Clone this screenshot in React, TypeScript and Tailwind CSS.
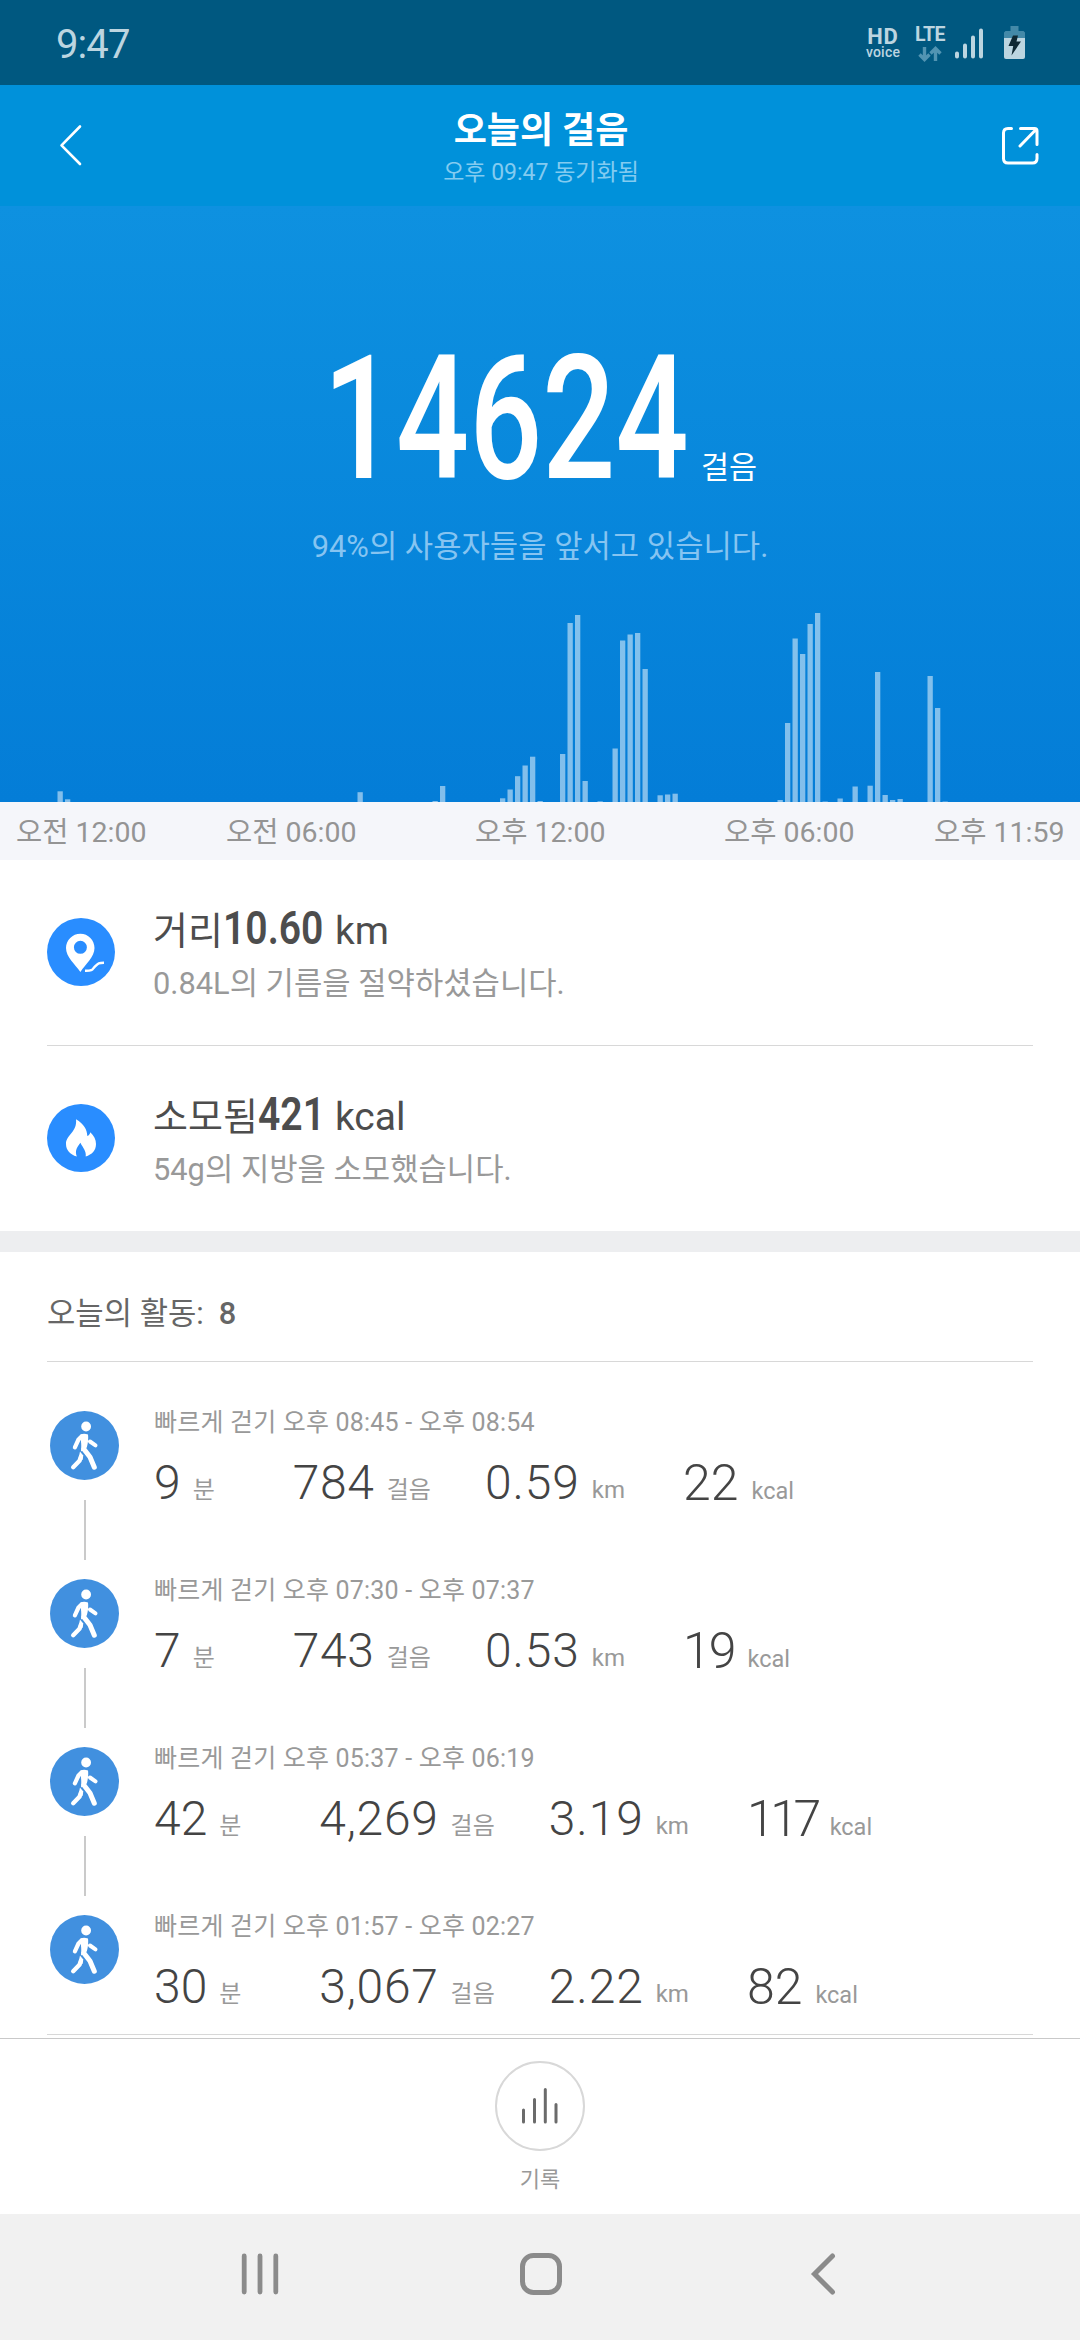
interface Activity {
  time: string;
  minutes: string;
  steps: string;
  distance: string;
  calories: string;
  caloriesClass: string;
}

const activities: Activity[] = [
  {
    time: "오후 08:45 - 오후 08:54",
    minutes: "9",
    steps: "784",
    distance: "0.59",
    calories: "22",
    caloriesClass: "tracking-normal",
  },
  {
    time: "오후 07:30 - 오후 07:37",
    minutes: "7",
    steps: "743",
    distance: "0.53",
    calories: "19",
    caloriesClass: "tracking-[-2px]",
  },
  {
    time: "오후 05:37 - 오후 06:19",
    minutes: "42",
    steps: "4,269",
    distance: "3.19",
    calories: "117",
    caloriesClass: "tracking-[-4.5px]",
  },
  {
    time: "오후 01:57 - 오후 02:27",
    minutes: "30",
    steps: "3,067",
    distance: "2.22",
    calories: "82",
    caloriesClass: "tracking-normal",
  },
];

const axisLabels = [
  "오전 12:00",
  "오전 06:00",
  "오후 12:00",
  "오후 06:00",
  "오후 11:59",
];

// [slot, height], one slot is ten minutes
const bars: [number, number][] = [
  [0, 10.7],
  [1, 2.7],
  [40, 9.8],
  [50, 1],
  [51, 16],
  [59, 3.7],
  [60, 12.5],
  [61, 25.8],
  [62, 36.5],
  [63, 45.3],
  [64, 1],
  [67, 48],
  [68, 179],
  [69, 187],
  [70, 21],
  [72, 0.7],
  [74, 53.5],
  [75, 161.5],
  [76, 167.5],
  [77, 169],
  [78, 133],
  [80, 6.7],
  [81, 7.5],
  [82, 8.3],
  [96, 2],
  [97, 79],
  [98, 163.5],
  [99, 148],
  [100, 178],
  [101, 189],
  [102, 0.5],
  [104, 3.5],
  [106, 15.5],
  [108, 16.3],
  [109, 130],
  [110, 7],
  [111, 2],
  [112, 3],
  [116, 126],
  [117, 94],
  [118, 0.5],
];

const StatusBar = () => (
  <div className="h-[85px] shrink-0 bg-[#005880] flex items-start pl-[56px] text-[#bcd5e0]">
    <span className="text-[40px] leading-[50px] tracking-[-0.9px] mt-[20px]">
      9:47
    </span>
    <div className="flex ml-auto mr-[55px] mt-[26px]">
      <div className="w-[34px] flex flex-col items-center mr-[14px] pt-[3px]">
        <span className="text-[22px] leading-[16px] font-bold tracking-[0.8px]">
          HD
        </span>
        <span className="text-[14px] leading-[14px] font-medium tracking-[0.2px]">
          voice
        </span>
      </div>
      <div className="w-[32px] flex flex-col items-center mr-[9px]">
        <span className="text-[19.5px] leading-[18px] font-bold tracking-[-0.5px]">
          LTE
        </span>
        <svg width="24" height="16" viewBox="0 0 24 16" className="mt-[2px]">
          <path
            d="M6.500 1V13M1.500 8.500L6.500 13.500L11.500 8.500M17.500 15V3M12.500 7.500L17.500 2.500L22.500 7.500"
            fill="none"
            stroke="#5294b2"
            strokeWidth="3.400"
          />
        </svg>
      </div>
      <svg width="28" height="34" viewBox="0 0 28 34" className="mr-[21px]">
        <path
          d="M2 27.500V30.500M10 19.500V30.500M18 11.500V30.500M26 4.500V30.500"
          stroke="#bcd5e0"
          strokeWidth="4"
          strokeLinecap="round"
        />
      </svg>
      <svg width="21" height="33" viewBox="0 0 21 33">
        <path d="M6.500 0H14.500V5H19.500L21 6.500V12H0V6.500L1.500 5H6.500Z" fill="#4389a8" />
        <path d="M0 12H21V31Q21 33 19 33H2Q0 33 0 31Z" fill="#bcd5e0" />
        <path d="M9 9.500H14L12.500 15.500H17L7.500 29.500L9.200 20H4.500Z" fill="#0f2833" />
      </svg>
    </div>
  </div>
);

const Header = () => (
  <div className="h-[121px] shrink-0 bg-[#0091da] flex items-start justify-between">
    <svg
      width="24"
      height="42"
      viewBox="0 0 24 42"
      className="ml-[58px] mt-[39px]"
    >
      <path
        d="M22 2.500L3.500 21.300L22 40"
        fill="none"
        stroke="white"
        strokeWidth="2.600"
        strokeLinecap="round"
        strokeLinejoin="round"
      />
    </svg>
    <div className="flex flex-col items-center pt-[26px]">
      <h1 className="text-[36px] leading-[40px] font-bold text-white">
        오늘의 걸음
      </h1>
      <p className="text-[23px] leading-[30px] mt-[7px] text-[#83cbf0]">
        오후 09:47 동기화됨
      </p>
    </div>
    <svg
      width="40"
      height="40"
      viewBox="0 0 40 40"
      className="mr-[40px] mt-[41px]"
    >
      <path
        d="M11.500 2.500H8Q3.500 2.500 3.500 7V32.500Q3.500 37 8 37H32.500Q37 37 37 32.500V28.500M20.500 2.500H34.500Q37 2.500 37 5V18.500M36 3.500L20 20"
        fill="none"
        stroke="white"
        strokeWidth="3"
        strokeLinecap="round"
        strokeLinejoin="round"
      />
    </svg>
  </div>
);

const StepChart = () => (
  <svg width="1080" height="190" viewBox="0 0 1080 190">
    {bars.map(([slot, height]) => (
      <rect
        key={slot}
        x={57.5 + slot * 7.5}
        y={190 - height}
        width="5.300"
        height={height}
        fill="white"
        fillOpacity="0.500"
      />
    ))}
  </svg>
);

const Hero = () => (
  <div className="h-[596px] shrink-0 bg-linear-to-b from-[#0e91e0] to-[#047dd7] flex flex-col items-center pt-[127px]">
    <div className="flex items-baseline h-[172px] text-white">
      <div className="w-[378px]">
        <span className="inline-block origin-left scale-x-[0.748] text-[172px] leading-[172px] font-medium">
          14624
        </span>
      </div>
      <span className="text-[30.500px] leading-[40px]">걸음</span>
    </div>
    <p className="text-[30.8px] leading-[40px] mt-[22px] text-[#86c4f1]">
      94%의 사용자들을 앞서고 있습니다.
    </p>
    <div className="mt-auto">
      <StepChart />
    </div>
  </div>
);

const PinIcon = () => (
  <svg width="68" height="68" viewBox="0 0 68 68">
    <circle cx="34" cy="34" r="34" fill="#298dff" />
    <path
      fillRule="evenodd"
      d="M33.400 15.700C25.500 15.700 19 22 19 30C19 39 28 46 33.400 54C38.500 46 47.500 39 47.500 30C47.500 22 41.200 15.700 33.400 15.700ZM33.400 22.800A6.500 6.500 0 1 1 33.400 35.800A6.500 6.500 0 1 1 33.400 22.800Z"
      fill="white"
    />
    <path
      d="M38 52.800C47 53 45 51 48 48.500C51 45.500 51 44.700 57 44.700"
      fill="none"
      stroke="white"
      strokeWidth="2.400"
    />
  </svg>
);

const FlameIcon = () => (
  <svg width="68" height="68" viewBox="0 0 68 68">
    <circle cx="34" cy="34" r="34" fill="#298dff" />
    <path
      d="M29 15.300C37 20 40 25.500 40.300 32C42 31.500 43 30 43.300 28.300C47 32 49 35.500 49 40C49 46.500 45 50.500 38.700 52.500C39.500 47 36 44 33.400 38.700C30.500 43 27.500 46 29.800 52.500C23 50.500 19 46 19 40C19 31 30.500 28 29 15.300Z"
      fill="white"
    />
  </svg>
);

const WalkIcon = () => (
  <svg width="69" height="69" viewBox="0 0 69 69">
    <circle cx="34.500" cy="34.500" r="34.500" fill="#4190df" />
    <circle cx="36.100" cy="15.500" r="4.900" fill="white" />
    <path
      d="M30.500 23.500Q34 21.800 38 23.500Q38.800 29 36.800 36.500L31 40.500Q31.500 34 31 31Z"
      fill="white"
    />
    <g
      fill="none"
      stroke="white"
      strokeLinecap="round"
      strokeLinejoin="round"
    >
      <path d="M31.500 25.500L28.500 28.500L24.900 36.300" strokeWidth="4.200" />
      <path d="M40 30.500L45.500 34.300" strokeWidth="4" />
      <path d="M33.800 38L40 46L44.300 56.200" strokeWidth="5" />
      <path d="M31 45.500L29.500 49.800L23.200 56.200" strokeWidth="4.400" />
    </g>
    <path d="M30 40.500L33.200 44.500L32.500 49L28.500 48Z" fill="white" />
  </svg>
);

interface StatRowProps {
  icon: React.ReactNode;
  label: string;
  value: string;
  valueClass: string;
  unit: string;
  note: string;
}

const StatRow = ({
  icon,
  label,
  value,
  valueClass,
  unit,
  note,
}: StatRowProps) => (
  <div className="h-[185px] flex items-start px-[47px]">
    <div className="mt-[58px] w-[68px]">{icon}</div>
    <div className="ml-[38px] pt-[43px]">
      <div className="flex items-baseline h-[50px] text-[38px] leading-[50px] text-[#4d4d4d]">
        <span>{label}</span>
        <div className={valueClass}>
          <span className="inline-block origin-left scale-x-[0.85] text-[46px] leading-[50px] font-semibold">
            {value}
          </span>
        </div>
        <span className="ml-[11px] text-[39px]">{unit}</span>
      </div>
      <p className="mt-[11px] text-[30.800px] leading-[40px] text-[#999999]">
        {note}
      </p>
    </div>
  </div>
);

const ActivityRow = ({
  activity,
  isLast,
}: {
  activity: Activity;
  isLast: boolean;
}) => (
  <div className="h-[168px] flex items-start">
    <div className="w-[69px] ml-[3px] flex flex-col items-center pt-1">
      <WalkIcon />
      {!isLast && <div className="w-[2px] h-[60px] mt-5 bg-[#cacaca]" />}
    </div>
    <div className="ml-[35px] pt-px">
      <p className="text-[25px] leading-[30px] tracking-[0.2px] text-[#999999]">
        빠르게 걷기 {activity.time}
      </p>
      <div className="mt-[14px] flex items-baseline leading-[60px] text-[#999999] text-[24px]">
        <span className="text-[48px] font-light text-[#444444]">
          {activity.minutes}
        </span>
        <span className="ml-[12px] -translate-y-[1.5px]">분</span>
        <span className="ml-[78px] text-[48px] font-light text-[#444444] tracking-[0.7px]">
          {activity.steps}
        </span>
        <span className="ml-[12px] -translate-y-[1.5px]">걸음</span>
        <span className="ml-[54px] text-[48px] font-light text-[#444444] tracking-[0.9px]">
          {activity.distance}
        </span>
        <span className="ml-[12px] -translate-y-[1.5px]">km</span>
        <div className="ml-[58px] text-[50px] font-light text-[#444444] translate-y-px">
          <span className={activity.caloriesClass}>{activity.calories}</span>
        </div>
        <span className="ml-[13px] text-[23.5px]">kcal</span>
      </div>
    </div>
  </div>
);

const BottomBar = () => (
  <div className="h-[176px] shrink-0 border-t border-[#c9c9c9] bg-white flex flex-col items-center">
    <div className="mt-[22px] size-[90px] rounded-full border-2 border-[#d8d8d8] flex items-center justify-center">
      <svg width="38" height="38" viewBox="0 0 38 38">
        <path
          d="M2.500 23V35M13.500 12.500V35M24.300 2.500V35M35 17.500V35"
          stroke="#6b6b6b"
          strokeWidth="3"
          strokeLinecap="round"
        />
      </svg>
    </div>
    <span className="mt-[14px] text-[22px] leading-[30px] text-[#999999]">
      기록
    </span>
  </div>
);

const NavBar = () => (
  <div className="h-[126px] shrink-0 bg-[#f1f1f1] flex items-start pl-[241px] pt-[38px]">
    <svg width="38" height="44" viewBox="0 0 38 44">
      <path
        d="M3.200 4V40M19 4V40M34.800 4V40"
        stroke="#8b8b8b"
        strokeWidth="4.800"
        strokeLinecap="round"
      />
    </svg>
    <svg width="44" height="44" viewBox="0 0 44 44" className="ml-[240px]">
      <rect
        x="3.500"
        y="3.500"
        width="37"
        height="37"
        rx="11"
        fill="none"
        stroke="#8b8b8b"
        strokeWidth="5"
      />
    </svg>
    <svg width="26" height="44" viewBox="0 0 26 44" className="ml-[247px]">
      <path
        d="M22.500 4L4.500 22L22.500 40"
        fill="none"
        stroke="#8b8b8b"
        strokeWidth="5"
        strokeLinecap="round"
      />
    </svg>
  </div>
);

export default function App() {
  return (
    <div className="w-[1080px] h-[2340px] overflow-hidden flex flex-col bg-white font-['Roboto','Noto_Sans_CJK_KR',sans-serif]">
      <StatusBar />
      <Header />
      <Hero />
      <div className="h-[58px] shrink-0 bg-[#f5f6fa] grid grid-cols-[210px_249px_249px_210px_auto] items-start pl-4 pt-[11px] text-[28.500px] leading-[40px] text-[#949494]">
        {axisLabels.map((label) => (
          <span key={label}>{label}</span>
        ))}
      </div>
      <StatRow
        icon={<PinIcon />}
        label="거리"
        value="10.60"
        valueClass="w-[101px]"
        unit="km"
        note="0.84L의 기름을 절약하셨습니다."
      />
      <div className="h-px shrink-0 mx-[47px] bg-[#d8d8d8]" />
      <StatRow
        icon={<FlameIcon />}
        label="소모됨"
        value="421"
        valueClass="w-[66px]"
        unit="kcal"
        note="54g의 지방을 소모했습니다."
      />
      <div className="h-[21px] shrink-0 bg-[#edeef0]" />
      <div className="h-[109px] shrink-0 pl-[47px] pt-[42px] flex items-start text-[30.800px] leading-[40px] text-[#666666]">
        <span>오늘의 활동:</span>
        <span className="ml-[15px] font-medium">8</span>
      </div>
      <div className="h-px shrink-0 mx-[47px] bg-[#d8d8d8]" />
      <div className="h-[672px] shrink-0 overflow-hidden px-[47px] pt-[45px]">
        {activities.map((activity, i) => (
          <ActivityRow
            key={activity.time}
            activity={activity}
            isLast={i === activities.length - 1}
          />
        ))}
      </div>
      <div className="h-px shrink-0 mx-[47px] mb-[3px] bg-[#d8d8d8]" />
      <BottomBar />
      <NavBar />
    </div>
  );
}
